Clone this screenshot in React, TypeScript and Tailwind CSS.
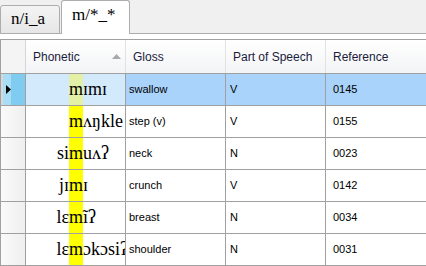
import { useState } from 'react';

type Row = { pre: string; post: string; gloss: string; pos: string; ref: string };

const rows: Row[] = [
  { pre: '', post: 'ɪmɪ', gloss: 'swallow', pos: 'V', ref: '0145' },
  { pre: '', post: 'ʌŋkle', gloss: 'step (v)', pos: 'V', ref: '0155' },
  { pre: 'si', post: 'uʌʔ', gloss: 'neck', pos: 'N', ref: '0023' },
  { pre: 'jɪ', post: 'ɪ', gloss: 'crunch', pos: 'V', ref: '0142' },
  { pre: 'lɛ', post: 'ĩʔ', gloss: 'breast', pos: 'N', ref: '0034' },
  { pre: 'lɛ', post: 'ɔkɔsiʔ', gloss: 'shoulder', pos: 'N', ref: '0031' },
];

const serif = { fontFamily: '"Liberation Serif", "DejaVu Serif", serif' };
const sans = { fontFamily: '"Liberation Sans", Arial, sans-serif' };

export default function App() {
  const [selected, setSelected] = useState(0);

  return (
    <div className="w-[426px] h-[266px] overflow-hidden bg-white flex flex-col">
      {/* tab strip */}
      <div className="flex items-end h-[34px] shrink-0 bg-[#f0f0f0]">
        <div
          className="w-[60px] h-[29px] border border-[#adadad] rounded-t-[3px] bg-gradient-to-b from-[#f4f4f4] to-[#e6e6e6] text-[17px] leading-[26px] pl-[10px] text-black"
          style={serif}
        >
          n/i_a
        </div>
        <div className="w-px h-px border-b border-[#adadad]" />
        <div
          className="w-[69px] h-[34px] border border-b-0 border-[#adadad] rounded-t-[3px] bg-white text-[17px] leading-[28px] pl-[10px] text-black"
          style={serif}
        >
          m/*_*
        </div>
        <div className="flex-1 border-b border-[#adadad]" />
      </div>

      <div className="h-[5px] shrink-0 bg-white" />

      {/* grid */}
      <div className="flex-1 border-t border-l border-[#a0a0a0]" style={sans}>
        {/* header */}
        <div className="flex h-[34px] border-b border-[#a0a0a0] bg-gradient-to-b from-white to-[#f3f4f6] text-[12px] text-[#1b1b3b]">
          <div className="w-[25px] border-r border-[#d5d5d5] bg-[#f4f4f4]" />
          <div className="w-[100px] border-r border-[#e2e2e2] flex items-center pl-[7px] pr-[4px]">
            <span className="flex-1">Phonetic</span>
            <svg width="9" height="5" viewBox="0 0 9 5">
              <path d="M0 5 L4.5 0 L9 5 Z" fill="#a8a8a8" />
            </svg>
          </div>
          <div className="w-[100px] border-r border-[#e2e2e2] flex items-center pl-[7px]">Gloss</div>
          <div className="w-[100px] border-r border-[#e2e2e2] flex items-center pl-[7px]">Part of Speech</div>
          <div className="flex-1 flex items-center pl-[7px]">Reference</div>
        </div>

        {rows.map((r, i) => {
          const sel = i === selected;
          return (
            <div
              key={i}
              onClick={() => setSelected(i)}
              className={`flex h-[32px] border-b border-[#a0a0a0] text-[11px] text-black ${sel ? 'bg-[#aad3fb]' : 'bg-white'}`}
            >
              <div className={`w-[25px] border-r border-[#a0a0a0] flex ${sel ? '' : 'bg-gradient-to-r from-[#fafafa] to-[#efefef]'}`}>
                {sel ? (
                  <>
                    <div className="w-[2px] bg-[#d8d8d8]" />
                    <div className="w-[8px] bg-[#a9ddf6] flex items-center justify-end">
                      <svg width="5" height="9" viewBox="0 0 5 9">
                        <path d="M0 0 L5 4.5 L0 9 Z" fill="#000" />
                      </svg>
                    </div>
                    <div className="flex-1 bg-[#7fccf0]" />
                  </>
                ) : null}
              </div>
              <div
                className={`w-[100px] border-r border-[#a0a0a0] flex overflow-hidden whitespace-nowrap text-[18px] leading-[31px] ${sel ? 'bg-[#d3e9fc]' : 'bg-white'}`}
                style={serif}
              >
                <span className="w-[43px] shrink-0 text-right">{r.pre}</span>
                <span className={`w-[14px] shrink-0 text-center ${sel ? 'bg-[#e3f0a6]' : 'bg-[#ffff00]'}`}>m</span>
                <span className="shrink-0">{r.post}</span>
              </div>
              <div className="w-[100px] border-r border-[#a0a0a0] flex items-center pl-[3px]">{r.gloss}</div>
              <div className="w-[100px] border-r border-[#a0a0a0] flex items-center pl-[4px]">{r.pos}</div>
              <div className="flex-1 flex items-center pl-[7px]">{r.ref}</div>
            </div>
          );
        })}
      </div>
    </div>
  );
}
